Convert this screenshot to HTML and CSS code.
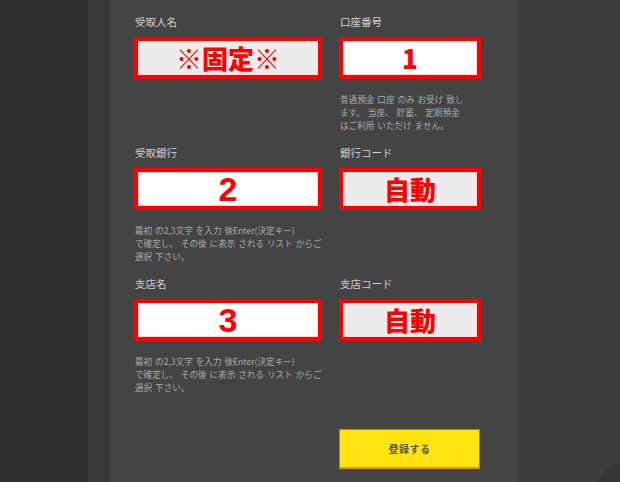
FILE: index.html
```html
<!DOCTYPE html>
<html lang="ja">
<head>
<meta charset="utf-8">
<title>振込先登録</title>
<link rel="stylesheet" href="styles.css">
</head>
<body>
<div class="page">
  <div class="strip-dark"></div>
  <div class="strip-mid"></div>
  <main class="panel">
    <div class="row">
      <div class="field">
        <div class="label">受取人名</div>
        <div class="box fixed"><span class="jp">※固定※</span></div>
      </div>
      <div class="field">
        <div class="label">口座番号</div>
        <div class="box"><span class="jp">1</span></div>
        <p class="note">普通預金 口座 のみ お受け 致し<br>ます。 当座、 貯蓄、 定期預金<br>はご利用 いただけ ません。</p>
      </div>
    </div>
    <div class="row">
      <div class="field">
        <div class="label">受取銀行</div>
        <div class="box"><span class="num">2</span></div>
        <p class="note">最初 の2,3文字 を入力 後Enter(決定キー)<br>で確定し、 その後 に表示 される リスト からご<br>選択 下さい。</p>
      </div>
      <div class="field">
        <div class="label">銀行コード</div>
        <div class="box fixed"><span class="jp">自動</span></div>
      </div>
    </div>
    <div class="row">
      <div class="field">
        <div class="label">支店名</div>
        <div class="box"><span class="num">3</span></div>
        <p class="note">最初 の2,3文字 を入力 後Enter(決定キー)<br>で確定し、 その後 に表示 される リスト からご<br>選択 下さい。</p>
      </div>
      <div class="field">
        <div class="label">支店コード</div>
        <div class="box fixed"><span class="jp">自動</span></div>
      </div>
    </div>
    <div class="row actions">
      <div></div>
      <button class="submit" type="button">登録する</button>
    </div>
  </main>
  <div class="side"></div>
  <div class="fab"></div>
</div>
</body>
</html>
```

FILE: styles.css
```css
html, body {
  margin: 0;
  padding: 0;
  background: #3d3d3d;
  font-family: "Noto Sans CJK JP", "Noto Sans", sans-serif;
}

.page {
  position: relative;
  display: flex;
  width: 620px;
  height: 482px;
  overflow: hidden;
}

.strip-dark {
  width: 88px;
  background: #2f2f2f;
}

.strip-mid {
  width: 22px;
  background: #393939;
}

.panel {
  width: 408px;
  box-sizing: border-box;
  background: #444444;
  padding: 15px 0 0 24px;
  display: flex;
  flex-direction: column;
  gap: 14px;
}

.side {
  flex: 1;
  background: #3d3d3d;
}

.row {
  display: grid;
  grid-template-columns: 188px 142px;
  column-gap: 17px;
}

.label {
  color: #d0d0d0;
  font-size: 10.5px;
  line-height: 14px;
  margin-bottom: 8px;
  padding-left: 1px;
}

.box {
  height: 42px;
  box-sizing: border-box;
  border: 4px solid #ff0000;
  background: #ffffff;
  box-shadow: inset 0 0 0 1px #ffd6d6;
  display: flex;
  align-items: center;
  justify-content: center;
  color: #ff0000;
  font-weight: 700;
}

.box.fixed {
  background: #ececec;
  box-shadow: inset 0 0 0 1px #f8dede;
}

.jp {
  font-family: "Noto Sans CJK JP", sans-serif;
  font-size: 26px;
  font-weight: 900;
  line-height: 1;
}

.num {
  font-family: "Liberation Sans", Arial, sans-serif;
  font-size: 34px;
  font-weight: 700;
  line-height: 1;
}

.note {
  margin: 14px 0 0;
  padding-left: 1px;
  color: #a9a9a9;
  font-size: 8.6px;
  line-height: 13px;
  white-space: nowrap;
  word-spacing: 1px;
}

.actions {
  margin-top: 21px;
}

.submit {
  width: 141px;
  height: 40px;
  margin: 0;
  padding: 0;
  border: 1px solid #9a8a3a;
  border-bottom: 2px solid #e09a00;
  background: #ffe40f;
  color: #5a5436;
  font-family: "Noto Sans CJK JP", sans-serif;
  font-size: 10px;
  font-weight: 700;
  letter-spacing: 0.5px;
}

.fab {
  position: absolute;
  left: 595px;
  top: 463px;
  width: 60px;
  height: 60px;
  border-radius: 50%;
  background: #363636;
}
```
